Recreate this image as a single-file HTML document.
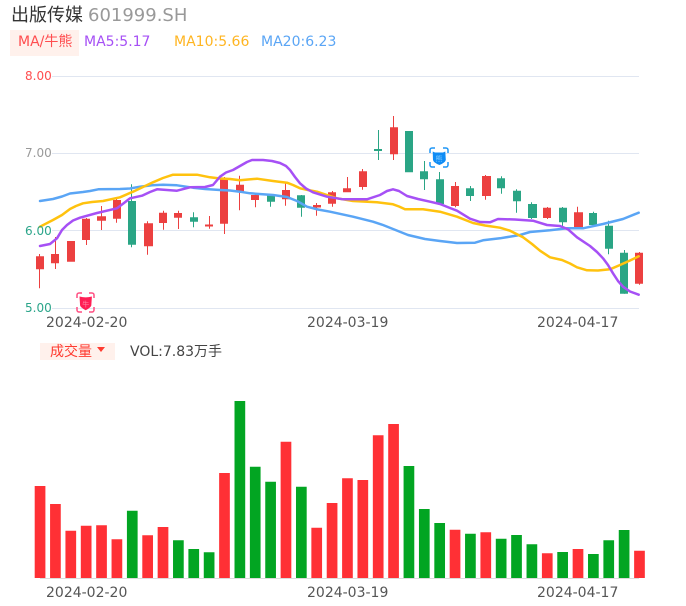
<!DOCTYPE html>
<html lang="zh-CN">
<head>
<meta charset="utf-8">
<title>出版传媒</title>
<style>
html,body{margin:0;padding:0;background:#fff;}
body{width:686px;height:606px;position:relative;overflow:hidden;font-family:"DejaVu Sans","WenQuanYi Zen Hei","Noto Sans CJK SC",sans-serif;}
.t{position:absolute;white-space:nowrap;line-height:1;}
.box{position:absolute;background:#fff1ec;}
svg{position:absolute;left:0;top:0;}
</style>
</head>
<body>
<svg width="686" height="606" viewBox="0 0 686 606">
  <!-- grid -->
  <path d="M52 76.5H639M52 153.5H639M52 230.5H639M52 308.5H639" stroke="#e0e6f1" stroke-width="1" fill="none"/>
  <path d="M40 578.5H639" stroke="#dcdcdc" stroke-width="1" fill="none"/>

  <!-- red wicks -->
  <path stroke="#ec4040" stroke-width="1" fill="none" d="M39.5 254V288.3M55.5 237V269M86.5 218V245M101.5 206V230M116.5 199V222.7M147.5 221.3V254.7M163.5 210.7V229.7M178.5 210.7V229M209.5 216V228.7M224.5 177V234M239.5 175.7V210.3M255.5 194V207.3M285.5 182V205.7M316.5 203V215.7M332.5 191V206.7M347.5 177V192M362.5 169V189.7M393.5 116V160M455.5 182V207.3M485.5 175V199.7M547.5 207V219M577.5 206.7V228.7M639.5 252V284.7"/>
  <!-- green wicks -->
  <path stroke="#2aa585" stroke-width="1" fill="none" d="M131.5 184.3V247.3M193.5 212.3V227.3M270.5 195V206.7M301.5 195V216.7M378.5 130V160M424.5 161V190M439.5 172V204M470.5 186V201M501.5 176.3V193.7M516.5 189.3V212.7M531.5 202.3V219M562.5 207V226.3M593.5 211.7V225M608.5 220.7V254.3M624.5 250V293.7"/>
  <!-- red bodies -->
  <path fill="#ec4040" d="M36 256.3h8V269.3h-8zM51 254h8V263.3h-8zM67 241h8V261.7h-8zM82 218.7h8V240h-8zM97 216.3h9V220.7h-9zM113 200h8V218.7h-8zM144 223.3h9V246.3h-9zM159 212.7h8V223h-8zM174 213h8V217.7h-8zM205 224.5h8V226.5h-8zM220 179h8V223.7h-8zM236 184.7h8V191.7h-8zM251 195h8V200h-8zM282 190h8V199.3h-8zM313 205h8V207.5h-8zM328 192.3h8V203.7h-8zM343 188.3h8V192.3h-8zM359 171.3h8V187h-8zM390 127.3h8V154.3h-8zM451 186h8V206h-8zM482 176h9V196h-9zM543 207.7h8V218h-8zM574 212.3h9V227.3h-9zM635 252.7h8V283.7h-8z"/>
  <!-- green bodies -->
  <path fill="#2aa585" d="M128 201h8V244.7h-8zM190 217.3h8V221.7h-8zM267 195h8V201.7h-8zM297 195.3h8V207.7h-8zM374 149h8V151h-8zM405 131h8V172.3h-8zM420 171.3h8V179.3h-8zM436 179.3h8V204h-8zM466 188.3h8V196h-8zM497 178.3h8V188.3h-8zM513 190.7h8V201.3h-8zM528 204h9V218h-9zM559 207.700h8V222.300h-8zM589 213h8V225h-8zM605 225.700h8V248.700h-8zM620 252.700h8V293.700h-8z"/>

  <!-- MA20 -->
  <polyline fill="none" stroke="#5aa5f5" stroke-width="2.5" stroke-linejoin="round" stroke-linecap="round" points="40,201 53,199 62,196.5 70,193.5 83,192 90,191 98.3,189.3 120,189 130,188.5 140,186.7 152,185.3 163,184.7 177,185.3 193,187.7 205,189 220,190 230,190.5 240,191.7 250,193.3 273,195 287,197 297,201 307,206.7 318,209.5 330,211.7 353,216.7 373,221.7 383,225 393,229 408,235 425,239 440,241 457,243 475,242.7 483,240.3 500,238.3 520,235 530,232 550,230.3 567,228.3 583,228.3 603,224 623,219 638.7,212.7"/>
  <!-- MA10 -->
  <polyline fill="none" stroke="#ffc20e" stroke-width="2.5" stroke-linejoin="round" stroke-linecap="round" points="40,226.7 53,220 62,215 70,209 76,206 83,203.3 92,202 103,201 120,197.3 133,191.7 143,187 153,182.3 163,178 173,174.7 197,174.7 210,177.3 220,178.5 230,179 240,180.3 248,179.5 257,178.7 273,181 287,182.7 293,185 300,188.3 308,190 317,191.7 327,195 337,198.3 353,201 377,202.3 393,204.3 399,206.5 405,209.3 423,209.3 440,211.7 457,216.7 473,223 485,225.5 500,227.7 510,230.7 523,237.3 532,244 540,250.7 550,257.3 562,260 570,263.5 577,267.3 587,270.3 598,270.5 610,269.3 620,265 630,260.5 638.7,256.3"/>
  <!-- MA5 -->
  <polyline fill="none" stroke="#a650f5" stroke-width="2.5" stroke-linejoin="round" stroke-linecap="round" points="40,246 50,244 57,238.3 62,230 67,225 73,220.5 80,217.7 97,213 117,208.3 124,203 130,198.3 142,195.7 150,192 157,189.3 177,190.7 190,187.3 205,187 213,185 220,176.7 226,172.5 233,170 240,166 247,162 252,160 263,160 272,161 280,163 286,166 290,170 295,177 300,183.3 306,188.5 313,192.3 327,196.7 343,199.3 367,199.3 380,195 387,191 393,189.3 399,191 407,196 418,199 430,201.7 440,204 450,208 457,210.7 470,218.7 480,222 490,222.3 498,219 515,219.5 533,220.7 547,225 560,226 568,229.3 577,237.3 590,246 597,252 603,258.3 608,265 613,273.3 618,281 623,286.7 630,291.5 638.7,294.7"/>

  <!-- bull badge -->
  <path d="M77 298V295a2 2 0 0 1 2-2h3M94 298V295a2 2 0 0 0-2-2h-3M77 307v3a2 2 0 0 0 2 2h3M94 307v3a2 2 0 0 1-2 2h-3" fill="none" stroke="#ff4f82" stroke-width="1.5"/>
  <path d="M79.500 296.500q6.200 1.800 12.400 0l-.6 9q-.5 2-5.600 4.800q-5.100-2.800-5.600-4.800z" fill="#ff1f55"/>
  <text x="85.700" y="306.500" text-anchor="middle" font-size="7" fill="#ff8aa8" font-family="'Noto Sans CJK SC',sans-serif">牛</text>

  <!-- bear badge -->
  <path d="M430 153V150a2 2 0 0 1 2-2h3M448 153V150a2 2 0 0 0-2-2h-3M430 162v3a2 2 0 0 0 2 2h3M448 162v3a2 2 0 0 1-2 2h-3" fill="none" stroke="#1e96f5" stroke-width="1.5"/>
  <path d="M432.700 151.500l2.300 1h8l2.300-1l.500 8.500q-.6 2.700-6.400 5q-5.800-2.300-6.400-5z" fill="#0f8cf5"/>
  <text x="439" y="161" text-anchor="middle" font-size="7" fill="#7cc8ff" font-family="'Noto Sans CJK SC',sans-serif">熊</text>

  <!-- red volume -->
  <path fill="#ff3035" d="M34.7 486h10.700V578h-10.700zM50.070 504h10.700V578h-10.700zM65.440 530.700h10.700V578h-10.700zM80.810 525.700h10.700V578h-10.700zM96.180 525.300h10.700V578h-10.700zM111.550 539.300h10.700V578h-10.700zM142.290 535.300h10.700V578h-10.700zM157.660 527h10.700V578h-10.700zM219.140 473h10.700V578h-10.700zM280.620 441.700h10.700V578h-10.700zM311.360 527.700h10.700V578h-10.700zM326.730 503h10.700V578h-10.700zM342.100 478.300h10.700V578h-10.700zM357.470 480h10.700V578h-10.700zM372.840 435.300h10.700V578h-10.700zM388.210 424h10.700V578h-10.700zM449.690 529.700h10.700V578h-10.700zM480.430 532.300h10.700V578h-10.700zM541.910 553.300h10.700V578h-10.700zM572.650 549h10.700V578h-10.700zM634.130 550.700h10.700V578h-10.700z"/>
  <!-- green volume -->
  <path fill="#02a522" d="M126.920 510.700h10.700V578h-10.700zM173.030 540.300h10.700V578h-10.700zM188.400 549h10.700V578h-10.700zM203.770 552.300h10.700V578h-10.700zM234.510 401h10.700V578h-10.700zM249.880 466.700h10.700V578h-10.700zM265.250 481.700h10.700V578h-10.700zM295.990 486.700h10.700V578h-10.700zM403.580 466h10.700V578h-10.700zM418.950 509h10.700V578h-10.700zM434.320 523h10.700V578h-10.700zM465.060 533.700h10.700V578h-10.700zM495.800 538.700h10.700V578h-10.700zM511.170 535h10.700V578h-10.700zM526.540 544.300h10.700V578h-10.700zM557.280 552h10.700V578h-10.700zM588.020 554h10.700V578h-10.700zM603.390 540.300h10.700V578h-10.700zM618.760 530h10.700V578h-10.700z"/>
</svg>

<div class="t" style="left:11px;top:7px;font-size:18px;color:#333;">出版传媒</div>
<div class="t" style="left:88px;top:7px;font-size:18px;color:#999;">601999.SH</div>

<div class="box" style="left:10px;top:30px;width:69px;height:26px;"></div>
<div class="t" style="left:18px;top:35px;font-size:14px;color:#ff4d4f;">MA/牛熊</div>
<div class="t" style="left:84px;top:35px;font-size:14px;color:#a650f5;">MA5:5.17</div>
<div class="t" style="left:174px;top:35px;font-size:14px;color:#ffb521;">MA10:5.66</div>
<div class="t" style="left:261px;top:35px;font-size:14px;color:#5aa5f5;">MA20:6.23</div>

<div class="t" style="left:25px;top:70px;font-size:12px;color:#ff4d4f;">8.00</div>
<div class="t" style="left:25px;top:147px;font-size:12px;color:#999;">7.00</div>
<div class="t" style="left:25px;top:225px;font-size:12px;color:#2ba58a;">6.00</div>
<div class="t" style="left:25px;top:302px;font-size:12px;color:#2ba58a;">5.00</div>

<div class="t" style="left:46px;top:316px;font-size:14px;color:#555;">2024-02-20</div>
<div class="t" style="left:307px;top:316px;font-size:14px;color:#555;">2024-03-19</div>
<div class="t" style="left:537px;top:316px;font-size:14px;color:#555;">2024-04-17</div>

<div class="box" style="left:40px;top:343px;width:75px;height:17px;"></div>
<div class="t" style="left:50px;top:345px;font-size:14px;color:#ff3b30;">成交量</div>
<div style="position:absolute;left:97px;top:347px;width:0;height:0;border-left:4px solid transparent;border-right:4px solid transparent;border-top:5px solid #ff3b30;"></div>
<div class="t" style="left:130px;top:345px;font-size:14px;color:#444;">VOL:7.83万手</div>

<div class="t" style="left:46px;top:586px;font-size:14px;color:#555;">2024-02-20</div>
<div class="t" style="left:307px;top:586px;font-size:14px;color:#555;">2024-03-19</div>
<div class="t" style="left:537px;top:586px;font-size:14px;color:#555;">2024-04-17</div>
</body>
</html>
